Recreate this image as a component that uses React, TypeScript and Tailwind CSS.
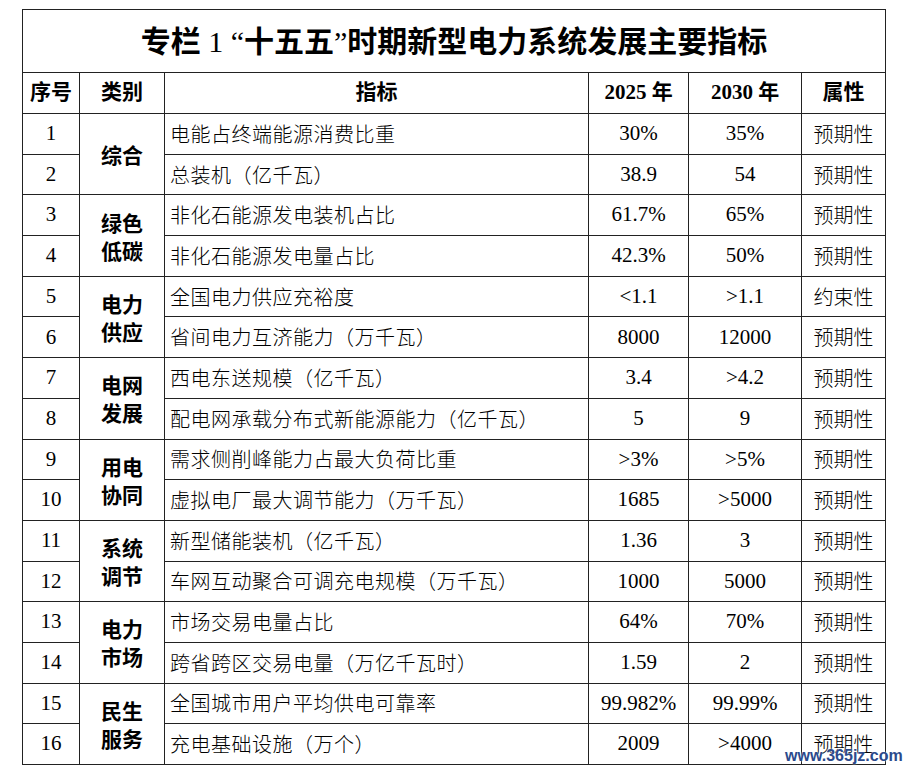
import React from 'react'

type Row = { no: string; item: string; y25: string; y30: string; attr: string }

const groups: { cat: string[]; rows: Row[] }[] = [
  {
    cat: ['综合'],
    rows: [
      { no: '1', item: '电能占终端能源消费比重', y25: '30%', y30: '35%', attr: '预期性' },
      { no: '2', item: '总装机（亿千瓦）', y25: '38.9', y30: '54', attr: '预期性' },
    ],
  },
  {
    cat: ['绿色', '低碳'],
    rows: [
      { no: '3', item: '非化石能源发电装机占比', y25: '61.7%', y30: '65%', attr: '预期性' },
      { no: '4', item: '非化石能源发电量占比', y25: '42.3%', y30: '50%', attr: '预期性' },
    ],
  },
  {
    cat: ['电力', '供应'],
    rows: [
      { no: '5', item: '全国电力供应充裕度', y25: '<1.1', y30: '>1.1', attr: '约束性' },
      { no: '6', item: '省间电力互济能力（万千瓦）', y25: '8000', y30: '12000', attr: '预期性' },
    ],
  },
  {
    cat: ['电网', '发展'],
    rows: [
      { no: '7', item: '西电东送规模（亿千瓦）', y25: '3.4', y30: '>4.2', attr: '预期性' },
      { no: '8', item: '配电网承载分布式新能源能力（亿千瓦）', y25: '5', y30: '9', attr: '预期性' },
    ],
  },
  {
    cat: ['用电', '协同'],
    rows: [
      { no: '9', item: '需求侧削峰能力占最大负荷比重', y25: '>3%', y30: '>5%', attr: '预期性' },
      { no: '10', item: '虚拟电厂最大调节能力（万千瓦）', y25: '1685', y30: '>5000', attr: '预期性' },
    ],
  },
  {
    cat: ['系统', '调节'],
    rows: [
      { no: '11', item: '新型储能装机（亿千瓦）', y25: '1.36', y30: '3', attr: '预期性' },
      { no: '12', item: '车网互动聚合可调充电规模（万千瓦）', y25: '1000', y30: '5000', attr: '预期性' },
    ],
  },
  {
    cat: ['电力', '市场'],
    rows: [
      { no: '13', item: '市场交易电量占比', y25: '64%', y30: '70%', attr: '预期性' },
      { no: '14', item: '跨省跨区交易电量（万亿千瓦时）', y25: '1.59', y30: '2', attr: '预期性' },
    ],
  },
  {
    cat: ['民生', '服务'],
    rows: [
      { no: '15', item: '全国城市用户平均供电可靠率', y25: '99.982%', y30: '99.99%', attr: '预期性' },
      { no: '16', item: '充电基础设施（万个）', y25: '2009', y30: '>4000', attr: '预期性' },
    ],
  },
]

const serif = "font-['Liberation_Serif','Noto_Sans_CJK_SC',serif]"
const cjk = "font-['Noto_Sans_CJK_SC',sans-serif]"
const cell = 'bg-white flex items-center justify-center'

export default function App() {
  return (
    <div className="relative w-[909px] h-[771px] bg-white overflow-hidden">
      <div className="pt-[9px] pl-[22px]">
        <div className="grid w-[864px] grid-cols-[56px_84px_423px_99px_112px_83px] grid-rows-[62px_40px_repeat(16,39.69px)] gap-px border border-[#222] bg-[#222] text-black">
          <div className={`${cell} col-span-6 ${serif} text-[30px] font-bold`}>
            <span>专栏</span>
            <span className="font-normal">&nbsp;1&nbsp;“</span>
            <span>十五五</span>
            <span className="font-normal">”</span>
            <span>时期新型电力系统发展主要指标</span>
          </div>

          {['序号', '类别', '指标', '2025 年', '2030 年', '属性'].map((h) => (
            <div key={h} className={`${cell} ${serif} text-[21px] font-bold`}>
              {h}
            </div>
          ))}

          {groups.map((g) =>
            g.rows.map((r, i) => (
              <React.Fragment key={r.no}>
                <div className={`${cell} ${serif} text-[21px]`}>{r.no}</div>
                {i === 0 && (
                  <div className={`${cell} row-span-2 flex-col ${cjk} text-[21px] font-bold leading-[28px]`}>
                    {g.cat.map((c) => (
                      <span key={c}>{c}</span>
                    ))}
                  </div>
                )}
                <div className={`bg-white flex items-center pl-[5px] ${cjk} text-[20px] tracking-[0.5px] font-light`}>{r.item}</div>
                <div className={`${cell} ${serif} text-[21px]`}>{r.y25}</div>
                <div className={`${cell} ${serif} text-[21px]`}>{r.y30}</div>
                <div className={`${cell} ${cjk} text-[20px] font-light`}>{r.attr}</div>
              </React.Fragment>
            ))
          )}
        </div>
      </div>

      <div className="absolute left-[785px] top-[744px] font-['Liberation_Sans',sans-serif] text-[16px] font-bold text-[#2b4a8c] [text-shadow:0_0_2px_#fff]">
        www.365jz.com
      </div>
    </div>
  )
}
